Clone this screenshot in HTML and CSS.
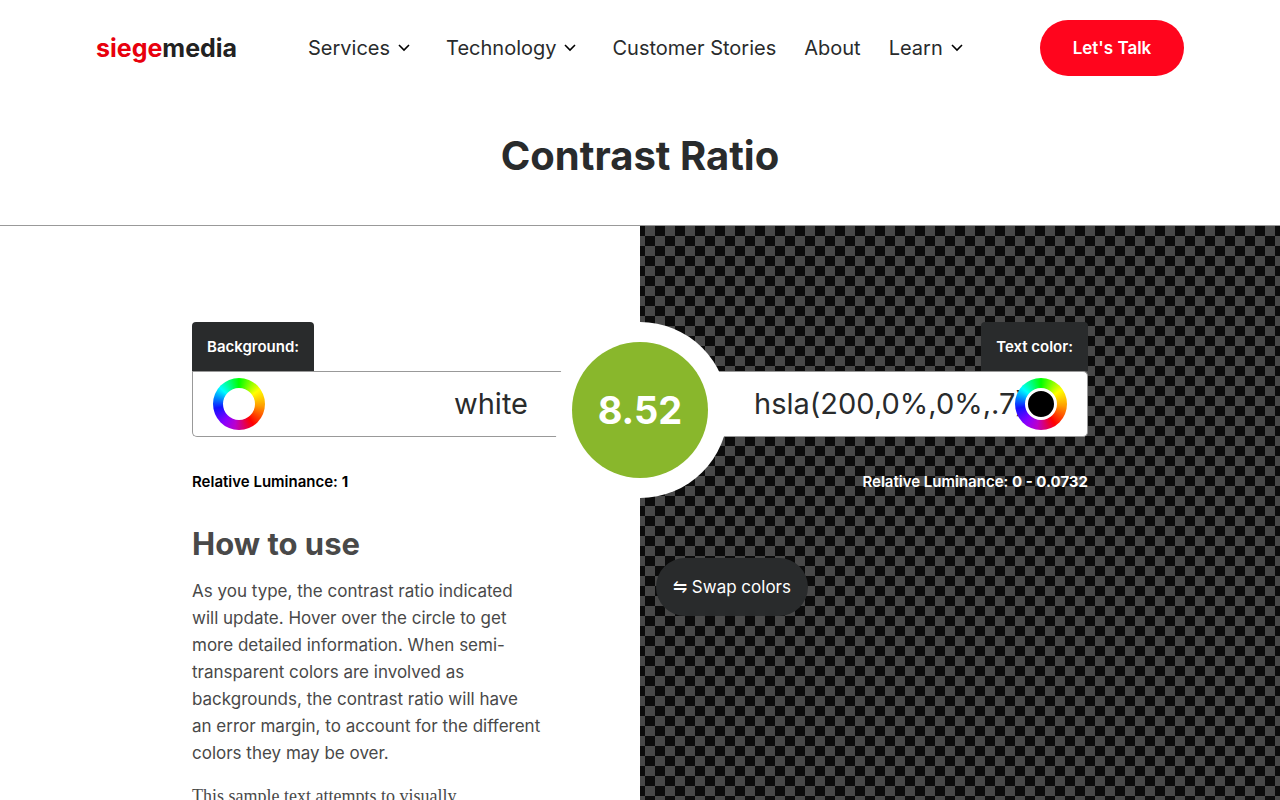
FILE: index.html
```html
<!DOCTYPE html>
<html lang="en">
<head>
<meta charset="utf-8">
<meta name="viewport" content="width=device-width, initial-scale=1">
<title>Contrast Ratio</title>
<link rel="stylesheet" href="styles.css">
</head>
<body>
<header class="site-header">
  <a class="logo" href="#"><span class="logo-accent">siege</span>media</a>
  <nav class="nav" aria-label="Main">
    <button class="nav-item nav-menu" type="button">Services <svg class="chevron" viewBox="0 0 12 8" aria-hidden="true"><path d="M1 1l5 5 5-5"/></svg></button>
    <button class="nav-item nav-menu" type="button">Technology <svg class="chevron" viewBox="0 0 12 8" aria-hidden="true"><path d="M1 1l5 5 5-5"/></svg></button>
    <a class="nav-item" href="#">Customer Stories</a>
    <a class="nav-item" href="#">About</a>
    <button class="nav-item nav-menu" type="button">Learn <svg class="chevron" viewBox="0 0 12 8" aria-hidden="true"><path d="M1 1l5 5 5-5"/></svg></button>
  </nav>
  <a class="cta" href="#">Let's Talk</a>
</header>
<h1 class="title">Contrast Ratio</h1>
<main class="playground">
  <section class="side side-background">
    <label class="tab" for="background">Background:</label>
    <div class="field">
      <input class="picker" type="color" value="#ffffff" aria-label="Pick background color">
      <input class="color-text" id="background" type="text" value="white">
    </div>
    <p class="luminance">Relative Luminance: <b>1</b></p>
    <h2 class="subtitle">How to use</h2>
    <p class="help">As you type, the contrast ratio indicated will update. Hover over the circle to get more detailed information. When semi-transparent colors are involved as backgrounds, the contrast ratio will have an error margin, to account for the different colors they may be over.</p>
    <p class="sample">This sample text attempts to visually</p>
  </section>
  <section class="side side-text">
    <label class="tab" for="foreground">Text color:</label>
    <div class="field">
      <input class="color-text" id="foreground" type="text" value="hsla(200,0%,0%,.7)">
      <input class="picker" type="color" value="#000000" aria-label="Pick text color">
    </div>
    <p class="luminance">Relative Luminance: <b>0 - 0.0732</b></p>
    <button class="swap" type="button">⇋ Swap colors</button>
  </section>
  <output class="ratio" for="background foreground"><span class="ratio-value">8.52</span></output>
</main>
</body>
</html>
```
FILE: styles.css
```css
* { box-sizing: border-box; }

body {
  margin: 0;
  min-height: 100vh;
  display: flex;
  flex-direction: column;
  background: #fff;
  color: #292b2c;
  font-family: Inter, "Liberation Sans", sans-serif;
}

button, input { font-family: inherit; }
a { color: inherit; text-decoration: none; }
p, h1, h2 { margin: 0; }

.site-header {
  display: flex;
  align-items: center;
  height: 96px;
  padding: 0 96px;
}

.logo {
  width: 212px;
  color: #222;
  font-size: 25px;
  font-weight: 700;
}
.logo-accent { color: #e8000d; }

.nav {
  display: flex;
  align-items: center;
  gap: 28px;
}
.nav-item {
  padding: 0;
  border: 0;
  background: none;
  color: #292b2c;
  font-size: 20px;
  line-height: 28px;
  white-space: nowrap;
}
.nav-menu {
  display: flex;
  align-items: center;
  gap: 8px;
  padding-right: 8px;
}
.chevron {
  width: 12px;
  height: 8px;
  fill: none;
  stroke: #000;
  stroke-width: 1.6;
}

.cta {
  margin-left: auto;
  width: 144px;
  border-radius: 28px;
  background: #ff051d;
  color: #fff;
  font-size: 17px;
  font-weight: 600;
  line-height: 56px;
  text-align: center;
}

.title {
  padding: 32px 0 41px;
  border-bottom: 1px solid #999;
  font-size: 40px;
  line-height: 56px;
  text-align: center;
}

.playground {
  position: relative;
  flex: 1;
  display: grid;
  grid-template-columns: repeat(2, minmax(0, 1fr));
}

.side {
  display: flex;
  flex-direction: column;
  align-items: flex-start;
  padding-top: 96px;
}
.side-background {
  padding-left: 192px;
  color: #000;
}
.side-text {
  align-items: flex-end;
  padding-right: 192px;
  background: conic-gradient(#484848 25%, #0b0b0b 0 50%, #484848 0 75%, #0b0b0b 0) -5px 0 / 20px 20px;
  color: #fff;
}

.tab {
  padding: 0 15px;
  border-radius: 4px 4px 0 0;
  background: #292b2c;
  color: #fff;
  font-size: 15px;
  font-weight: 600;
  line-height: 49px;
}

.field {
  align-self: stretch;
  display: flex;
  align-items: center;
  height: 66px;
  padding: 0 20px;
  border: 1px solid #999;
  background: #fff;
}
.side-background .field {
  border-right: 0;
  border-radius: 0 0 0 5px;
  padding-right: 112px;
}
.side-text .field {
  border-left: 0;
  border-radius: 0 5px 5px 0;
  padding-left: 114px;
}

.color-text {
  flex: 1;
  min-width: 0;
  padding: 0;
  border: 0;
  background: none;
  color: #292b2c;
  font-size: 29px;
  line-height: 40px;
}
.side-background .color-text { text-align: right; }
/* Long values slide under the picker */
.side-text .color-text { margin-right: -20px; }

.picker {
  appearance: none;
  position: relative;
  flex: none;
  width: 52px;
  height: 52px;
  padding: 10px;
  border: 0;
  border-radius: 50%;
  background: conic-gradient(#0f0, #ff0 55deg, #ff9d00 95deg, #f00 145deg, #b0c 190deg, #80f 220deg, #11f 260deg, #08f 285deg, #0ff 310deg, #0f0);
}
.picker::-webkit-color-swatch-wrapper { padding: 0; }
.picker::-webkit-color-swatch {
  border: 3px solid #fff;
  border-radius: 50%;
}

.luminance {
  padding-top: 32px;
  font-size: 15px;
  font-weight: 600;
  line-height: 26px;
}
.luminance b { font-weight: 700; }

.subtitle {
  padding-top: 29px;
  color: #494949;
  font-size: 31px;
  line-height: 40px;
}

.help, .sample {
  width: 350px;
  color: #494949;
  font-size: 17px;
  line-height: 27px;
}
.help { padding-top: 14px; }
.sample {
  padding-top: 16px;
  font-family: "Liberation Serif", serif;
  font-size: 18px;
}

.swap {
  align-self: flex-start;
  width: 152px;
  height: 58px;
  margin: 63px 0 0 16px;
  padding: 0;
  border: 0;
  border-radius: 29px;
  background: #292b2c;
  color: #fff;
  font-size: 17px;
}

/* Result badge straddling both halves */
.ratio {
  position: absolute;
  top: 96px;
  left: 50%;
  padding: 20px;
  border-radius: 50%;
  background: #fff;
  transform: translateX(-50%);
}
.ratio-value {
  display: flex;
  align-items: center;
  justify-content: center;
  width: 136px;
  height: 136px;
  border-radius: 50%;
  background: #89b72c;
  color: #fff;
  font-size: 38px;
  font-weight: 700;
}
```
